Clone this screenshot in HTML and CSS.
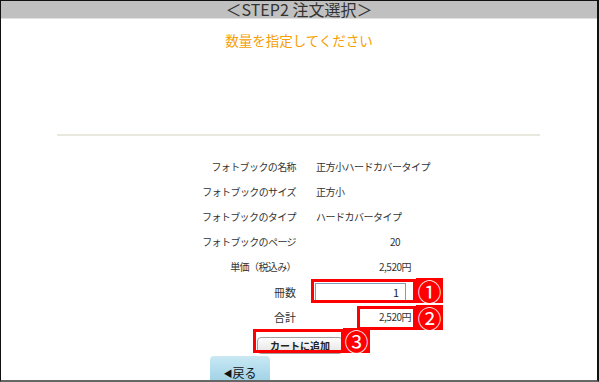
FILE: index.html
```html
<!DOCTYPE html>
<html lang="ja">
<head>
    <meta charset="UTF-8">
    <title>STEP2 注文選択</title>
    <link rel="stylesheet" href="styles.css">
</head>
<body>
    <div class="frame">
        <div class="step-header">＜STEP2 注文選択＞</div>
        <div class="lead">数量を指定してください</div>
        <div class="rule"></div>

        <!-- 商品情報 -->
        <div class="spec">
            <div class="label">フォトブックの名称</div>
            <div class="value">正方小ハードカバータイプ</div>

            <div class="label">フォトブックのサイズ</div>
            <div class="value">正方小</div>

            <div class="label">フォトブックのタイプ</div>
            <div class="value">ハードカバータイプ</div>

            <div class="label">フォトブックのページ</div>
            <div class="value num pages">20</div>

            <div class="label">単価（税込み）</div>
            <div class="value num">2,520円</div>

            <div class="label kanji">冊数</div>
            <div class="value"><input type="text" class="qty" value="1"></div>

            <div class="label kanji">合計</div>
            <div class="value num">2,520円</div>
        </div>

        <div class="actions">
            <button class="cart-btn">カートに追加</button>
        </div>

        <div class="back-row">
            <div class="back-tab"><span class="arrow">◀</span>戻る</div>
        </div>

        <!-- 説明用マーカー -->
        <div class="mark-box box-qty"></div>
        <div class="mark-num num-1">①</div>
        <div class="mark-box box-total"></div>
        <div class="mark-num num-2">②</div>
        <div class="mark-box box-cart"></div>
        <div class="mark-num num-3">③</div>
    </div>
</body>
</html>
```

FILE: styles.css
```css
body {
    margin: 0;
    padding: 0;
    font-family: "Noto Sans CJK JP", "Liberation Sans", sans-serif;
    background-color: white;
}

.frame {
    position: relative;
    width: 599px;
    height: 382px;
    box-sizing: border-box;
    border-top: 1px solid #111;
    border-left: 1px solid #111;
    border-right: 2px solid #111;
    border-bottom: 2px solid #666;
    overflow: hidden;
}

.step-header {
    height: 17px;
    line-height: 17px;
    background-color: #c0c0c0;
    border-bottom: 1px solid #e0e0e0;
    text-align: center;
    font-size: 16px;
    color: #333;
}

.lead {
    margin-top: 13px;
    text-align: center;
    font-size: 13.5px;
    line-height: 16px;
    color: #f5a000;
}

.rule {
    margin: 86px 57px 0 56px;
    height: 2px;
    background-color: #e8e8df;
}

.spec {
    margin-top: 18px;
    display: grid;
    grid-template-columns: 295px 1fr;
    column-gap: 20px;
    grid-auto-rows: 25px;
    align-items: center;
    font-size: 10px;
    color: #333;
}

.label {
    text-align: right;
    letter-spacing: -0.6px;
}

.label.kanji {
    font-size: 11px;
    letter-spacing: 0;
}

.value {
    letter-spacing: -0.5px;
}

.value.num {
    width: 95px;
    text-align: right;
}

.value.pages {
    width: 84px;
}

.qty {
    width: 91px;
    height: 18px;
    box-sizing: border-box;
    margin-left: -1px;
    border: 1px solid #7f9db9;
    padding: 0 6px;
    text-align: right;
    font-family: "Noto Sans CJK JP", sans-serif;
    font-size: 11px;
    color: #222;
}

.actions {
    margin-top: 2px;
    text-align: center;
}

.cart-btn {
    width: 86px;
    height: 17px;
    padding: 0;
    margin-left: 2px;
    border: 1px solid #a0a0a0;
    border-radius: 4px;
    background: linear-gradient(#fdfdfd, #e4e4e4);
    font-family: "Noto Sans CJK JP", sans-serif;
    font-size: 10px;
    font-weight: bold;
    color: #222;
    line-height: 15px;
}

.back-row {
    margin-top: 1px;
    padding-left: 209px;
}

.back-tab {
    width: 60px;
    height: 32px;
    box-sizing: border-box;
    padding-top: 8px;
    border-radius: 4px 4px 0 0;
    background: linear-gradient(#c9e8f4, #96cde2);
    text-align: center;
    font-size: 12px;
    color: #111;
}

.arrow {
    font-size: 9px;
    vertical-align: 1px;
}

.mark-box {
    position: absolute;
    border: 3px solid #f00;
}

.box-qty {
    left: 310px;
    top: 278px;
    width: 99px;
    height: 18px;
}

.box-total {
    left: 356px;
    top: 305px;
    width: 53px;
    height: 18px;
}

.box-cart {
    left: 252px;
    top: 328px;
    width: 85px;
    height: 18px;
}

.mark-num {
    position: absolute;
    width: 27px;
    height: 25px;
    background-color: #f00;
    color: white;
    text-align: center;
    font-size: 24px;
    line-height: 25px;
}

.num-1 {
    left: 415px;
    top: 277px;
}

.num-2 {
    left: 415px;
    top: 304px;
}

.num-3 {
    left: 342px;
    top: 327px;
}
```
